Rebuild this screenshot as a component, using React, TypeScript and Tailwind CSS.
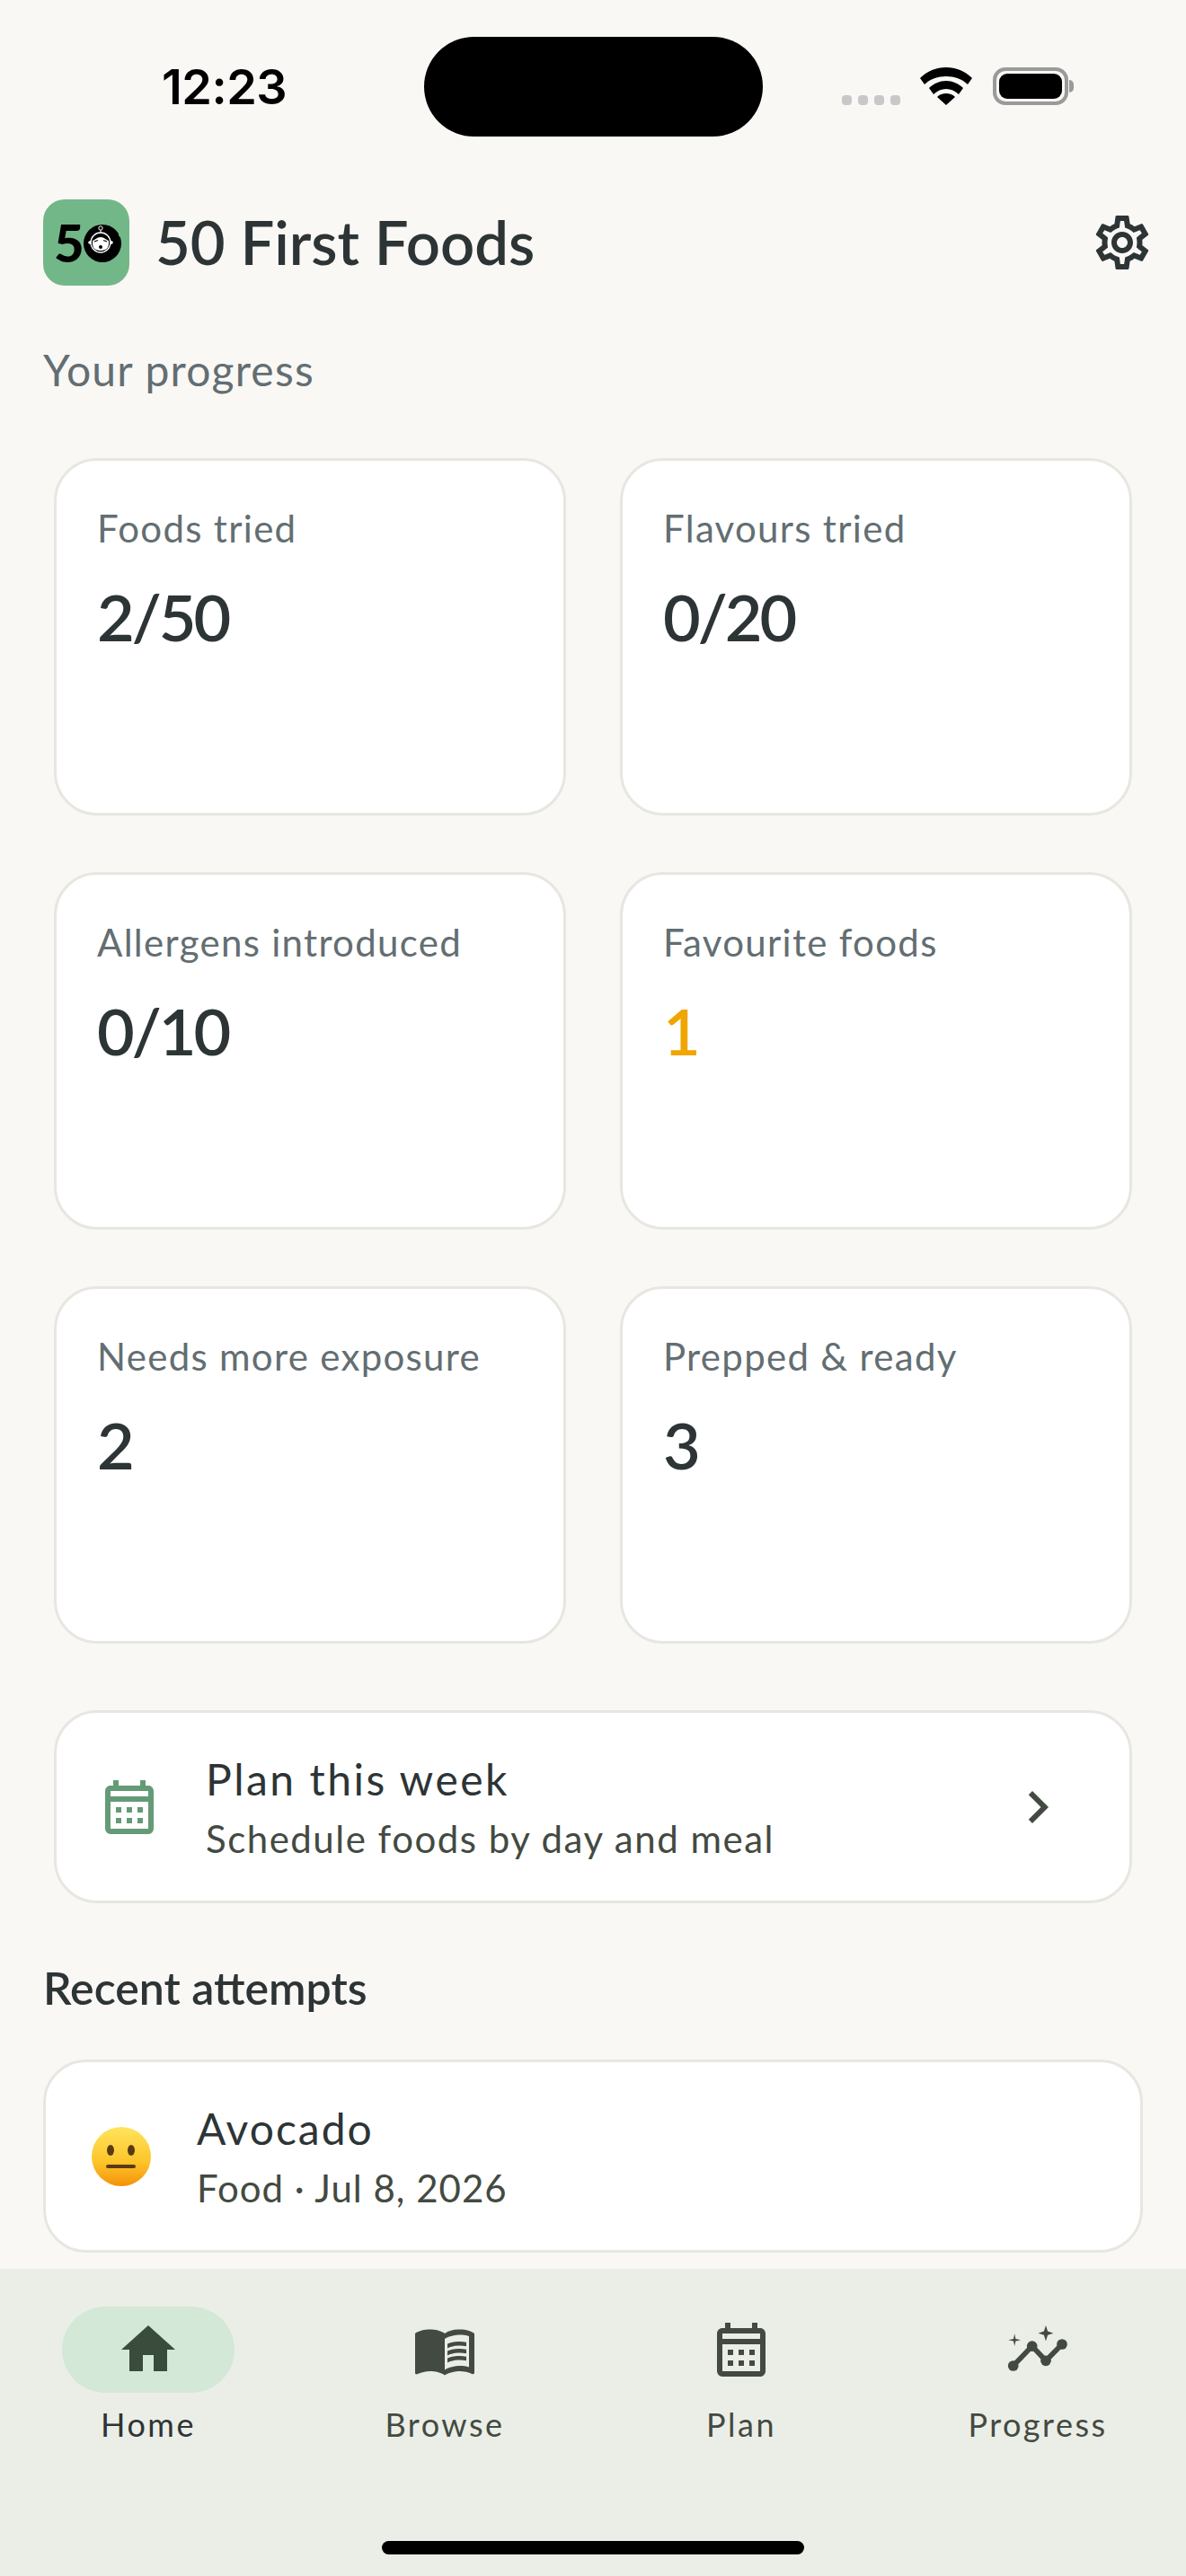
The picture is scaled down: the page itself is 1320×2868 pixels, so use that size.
import React from 'react';
import {
  MdChevronRight,
  MdHome,
  MdMenuBook,
  MdOutlineCalendarMonth,
  MdOutlineSettings,
} from 'react-icons/md';

// line chart with sparkles, no matching glyph in the icon packs
function ProgressIcon({ className, size }: { className?: string; size?: number }) {
  return (
    <svg className={className} width={size} height={size} viewBox="0 0 24 24" fill="currentColor">
      <path d="M2.9 18L9.9 10.7 15 16.1 21 10" fill="none" stroke="currentColor" strokeWidth="1.9" />
      <circle cx="2.9" cy="18" r="1.95" />
      <circle cx="9.9" cy="10.7" r="1.95" />
      <circle cx="15" cy="16.1" r="1.95" />
      <circle cx="21" cy="10" r="1.95" />
      <path d="M15 3l.7 2.2 2.1.7-2.1.7L15 8.8l-.7-2.2-2.1-.7 2.1-.7z" />
      <path d="M3.4 6.1l.4 1.9 1.9.4-1.9.4-.4 1.9-.4-1.9-1.9-.4 1.9-.4z" />
    </svg>
  );
}

const STATS = [
  { label: 'Foods tried', value: '2/50' },
  { label: 'Flavours tried', value: '0/20' },
  { label: 'Allergens introduced', value: '0/10' },
  { label: 'Favourite foods', value: '1', accent: true },
  { label: 'Needs more exposure', value: '2' },
  { label: 'Prepped & ready', value: '3' },
];

const NAV_ITEMS = [
  { label: 'Home', icon: MdHome, active: true },
  { label: 'Browse', icon: MdMenuBook },
  { label: 'Plan', icon: MdOutlineCalendarMonth },
  { label: 'Progress', icon: ProgressIcon },
];

function WifiIcon() {
  return (
    <svg width="58" height="42" viewBox="0 0 58 42" fill="#000">
      <path d="M29 0C18 0 8 4 0 12l5 7c6-6 15-9 24-9s18 3 24 9l5-7C50 4 40 0 29 0z" />
      <path d="M29 15c-7 0-14 3-19 8l5 7c4-4 9-6 14-6s10 2 14 6l5-7c-5-5-12-8-19-8z" />
      <path d="M29 29c-4 0-7 1-10 4l10 9 10-9c-3-3-6-4-10-4z" />
    </svg>
  );
}

function BatteryIcon() {
  return (
    <div className="flex items-center">
      <div className="flex h-[42px] w-[84px] items-center justify-center rounded-[14px] border-[4px] border-[#9a9a9a]">
        <div className="h-[28px] w-[70px] rounded-[9px] bg-black" />
      </div>
      <div className="ml-[1px] h-[14px] w-[5px] rounded-r-full bg-[#9a9a9a]" />
    </div>
  );
}

function StatusBar() {
  return (
    <div className="mt-[41px] flex h-[111px] shrink-0 items-start">
      <div className="ml-[180px] mt-[30px] w-[292px] font-['Inter',sans-serif] text-[54px] font-semibold leading-[52px] tracking-[-0.5px] text-black">
        12:23
      </div>
      <div className="h-[111px] w-[377px] rounded-[56px] bg-black" />
      <div className="ml-[88px] mt-[65px] flex gap-[7px]">
        {[0, 1, 2, 3].map((i) => (
          <div key={i} className="h-[11px] w-[11px] rounded-[4px] bg-[#c8c8c8]" />
        ))}
      </div>
      <div className="ml-[22px] mt-[34px]">
        <WifiIcon />
      </div>
      <div className="ml-[23px] mt-[34px]">
        <BatteryIcon />
      </div>
    </div>
  );
}

function Logo() {
  return (
    <div className="flex h-[96px] w-[96px] shrink-0 items-center rounded-[24px] bg-[#72b788] pl-[12px]">
      <span className="w-[32px] text-[58px] font-black leading-[58px] text-black">5</span>
      <svg width="44" height="46" viewBox="0 0 44 46">
        <circle cx="22" cy="24" r="21" fill="#000" />
        <circle cx="40" cy="6" r="4" fill="#72b788" />
        <circle cx="43" cy="14" r="3" fill="#72b788" />
        <circle cx="34" cy="3" r="3" fill="#72b788" />
        <circle cx="20" cy="23" r="11" fill="#000" stroke="#fff" strokeWidth="1.3" />
        <circle cx="8" cy="23" r="1.8" fill="#fff" />
        <circle cx="32" cy="23" r="1.8" fill="#fff" />
        <path d="M11 21c3-1 5-4 9-4s6 3 9 4v3c0 6-4 8-9 8s-9-2-9-8z" fill="#fff" />
        <path d="M13 22l4-1.5M23 20.5l4 1.5" stroke="#000" strokeWidth="1.3" />
        <circle cx="20" cy="28" r="2" fill="#000" />
        <circle cx="20" cy="7" r="2.2" fill="none" stroke="#fff" strokeWidth="1" />
        <path d="M20 9v3" stroke="#fff" strokeWidth="1" />
      </svg>
    </div>
  );
}

function Header() {
  return (
    <header className="mt-[70px] flex h-[96px] shrink-0 items-center pl-[48px] pr-[35px]">
      <Logo />
      <h1 className="ml-[29px] mt-[-2px] text-[67px] font-semibold leading-[80px] text-[#2d3436]">50 First Foods</h1>
      <MdOutlineSettings className="ml-auto text-[#2d3436]" size={72} />
    </header>
  );
}

function StatCard({ label, value, accent }: { label: string; value: string; accent?: boolean }) {
  return (
    <div className="h-[398px] rounded-[48px] border-[3px] border-[#e8e6e1] bg-white px-[45px] pt-[47px]">
      <div className="text-[42px] leading-[56px] tracking-[1.3px] text-[#636e72]">{label}</div>
      <div
        className={`mt-[26px] text-[72px] font-semibold leading-[88px] tracking-[-3px] ${accent ? 'text-[#f0a500]' : 'text-[#2d3436]'}`}
      >
        {value}
      </div>
    </div>
  );
}

function NeutralFace() {
  return (
    <svg width="68" height="68" viewBox="0 0 68 68">
      <defs>
        <linearGradient id="faceFill" x1="0" y1="0" x2="0" y2="1">
          <stop offset="0%" stopColor="#ffe45c" />
          <stop offset="60%" stopColor="#fdc42a" />
          <stop offset="100%" stopColor="#f4920a" />
        </linearGradient>
      </defs>
      <circle cx="34" cy="34" r="33" fill="url(#faceFill)" />
      <ellipse cx="22" cy="27" rx="4" ry="6" fill="#5a3a12" />
      <ellipse cx="45" cy="27" rx="4" ry="6" fill="#5a3a12" />
      <rect x="17" y="43" width="33" height="4" rx="2" fill="#5a3a12" />
    </svg>
  );
}

function PlanCard() {
  return (
    <div className="mx-[60px] mt-[74px] flex h-[215px] shrink-0 items-center rounded-[48px] border-[3px] border-[#e8e6e1] bg-white pl-[45px] pr-[66px]">
      <MdOutlineCalendarMonth className="shrink-0 text-[#659a76]" size={72} />
      <div className="ml-[49px]">
        <div className="text-[48px] leading-[64px] tracking-[2.5px] text-[#2d3436]">Plan this week</div>
        <div className="mt-[6px] text-[42px] leading-[56px] tracking-[1.5px] text-[#434a41]">
          Schedule foods by day and meal
        </div>
      </div>
      <MdChevronRight className="ml-auto shrink-0 text-[#434a41]" size={72} />
    </div>
  );
}

function RecentAttempts() {
  return (
    <section className="min-h-0 flex-1 overflow-hidden px-[48px]">
      <h2 className="mt-[62px] text-[50px] font-semibold leading-[64px] text-[#2d3436]">Recent attempts</h2>
      <div className="mt-[48px] flex h-[215px] items-center rounded-[48px] border-[3px] border-[#e8e6e1] bg-white pl-[50px]">
        <NeutralFace />
        <div className="ml-[50px]">
          <div className="text-[48px] leading-[64px] tracking-[2px] text-[#2d3436]">Avocado</div>
          <div className="mt-[6px] text-[42px] leading-[56px] tracking-[1px] text-[#434a41]">Food · Jul 8, 2026</div>
        </div>
      </div>
    </section>
  );
}

function BottomNav() {
  return (
    <nav className="relative h-[342px] shrink-0 bg-[#ebeee7] pt-[42px]">
      <div className="grid grid-cols-4">
        {NAV_ITEMS.map(({ label, icon: Icon, active }) => (
          <div key={label} className="flex flex-col items-center">
            <div
              className={`flex h-[96px] w-[192px] items-center justify-center rounded-full ${active ? 'bg-[#d3e8d6]' : ''}`}
            >
              <Icon className={active ? 'text-[#3a4d3d]' : 'text-[#434a41]'} size={72} />
            </div>
            <span
              className={`mt-[11px] text-[36px] leading-[48px] tracking-[2.5px] ${active ? 'text-[#2d3436]' : 'text-[#434a41]'}`}
            >
              {label}
            </span>
          </div>
        ))}
      </div>
      <div className="absolute bottom-[24px] left-[425px] h-[15px] w-[470px] rounded-full bg-black" />
    </nav>
  );
}

export default function App() {
  return (
    <div className="flex h-[2868px] w-[1320px] flex-col overflow-hidden bg-[#faf8f5] font-['Lato',sans-serif]">
      <StatusBar />
      <Header />
      <div className="mt-[64px] shrink-0 pl-[48px] text-[48px] leading-[60px] tracking-[1.2px] text-[#636e72]">
        Your progress
      </div>
      <div className="mt-[68px] grid shrink-0 grid-cols-2 gap-x-[60px] gap-y-[63px] px-[60px]">
        {STATS.map((s) => (
          <StatCard key={s.label} {...s} />
        ))}
      </div>
      <PlanCard />
      <RecentAttempts />
      <BottomNav />
    </div>
  );
}
